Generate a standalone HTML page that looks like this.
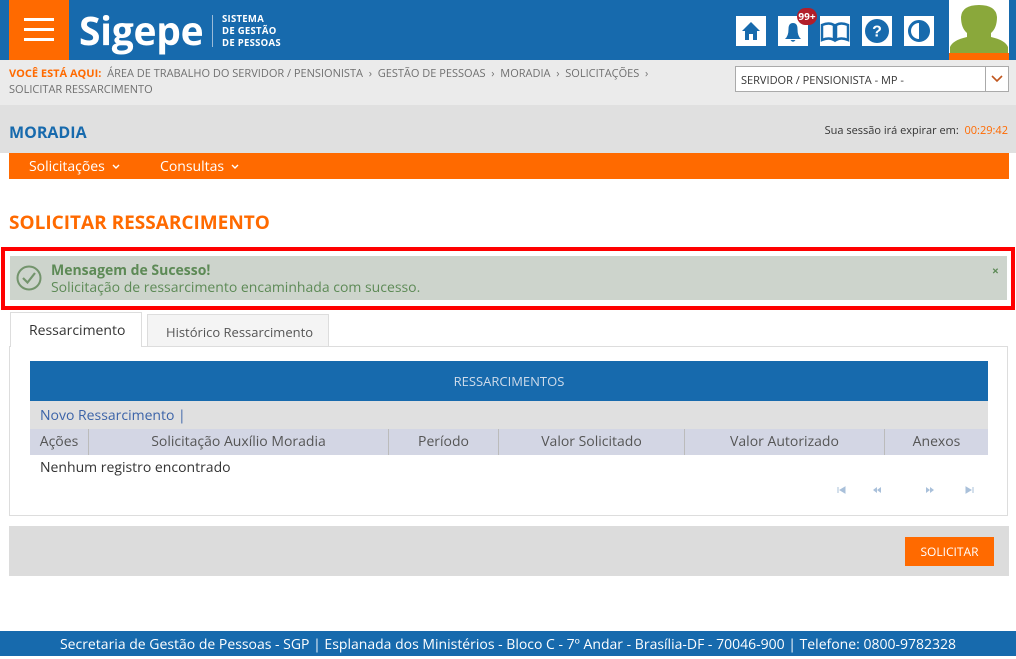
<!DOCTYPE html>
<html><head><meta charset="utf-8"><style>
*{margin:0;padding:0;box-sizing:border-box}
body{width:1016px;height:656px;position:relative;background:#fff;font-family:"Open Sans","Liberation Sans",sans-serif;overflow:hidden}
.a{position:absolute}
.ic{position:absolute;top:16px;width:30px;height:30px;background:#fff}
.pg{position:absolute;top:486px;width:10px;height:8px}
</style></head><body>
<div class="a" style="left:0;top:0;width:1016px;height:60px;background:#176aad"></div>
<div class="a" style="left:9px;top:0;width:60px;height:60px;background:#ff6a00"></div>
<div class="a" style="left:24px;top:18px;width:30px;height:3px;background:#fff"></div>
<div class="a" style="left:24px;top:28px;width:30px;height:3px;background:#fff"></div>
<div class="a" style="left:24px;top:38px;width:30px;height:3px;background:#fff"></div>
<div class="a" style="left:79px;top:4px;color:#fff;font-weight:bold;font-size:39px;letter-spacing:-0.3px">Sigepe</div>
<div class="a" style="left:212px;top:15px;width:1px;height:32px;background:#9bbbd8"></div>
<div class="a" style="left:222px;top:13px;color:#fff;font-size:9.5px;line-height:12px;font-weight:bold;letter-spacing:.3px">SISTEMA<br>DE GESTÃO<br>DE PESSOAS</div>
<div class="ic" style="left:736px"><svg width="30" height="30"><path d="M6 15 L15 6 L24 15 H21 V24 H17 V18 H13 V24 H9 V15Z" fill="#176aad"/></svg></div>
<div class="ic" style="left:778px"><svg width="30" height="30"><path d="M7 23 Q10.5 20 10.5 13 Q10.5 7 15 7 Q19.5 7 19.5 13 Q19.5 20 23 23Z M12.5 24 Q15 27.5 17.5 24Z" fill="#176aad"/></svg></div>
<div class="a" style="left:797px;top:8px;width:20px;height:17px;border-radius:9px;background:#b21e2a;color:#fff;font-size:10px;font-weight:bold;text-align:center;line-height:17px">99+</div>
<div class="ic" style="left:820px"><svg width="30" height="30"><path d="M2 9 Q9 6 14 9 V24 Q9 21 2 24Z M16 9 Q21 6 28 9 V24 Q21 21 16 24Z" fill="none" stroke="#176aad" stroke-width="2.5"/></svg></div>
<div class="ic" style="left:862px"><svg width="30" height="30"><circle cx="15" cy="15" r="12" fill="#176aad"/><text x="15" y="20.5" text-anchor="middle" fill="#fff" font-size="16" font-weight="bold" font-family="Liberation Sans">?</text></svg></div>
<div class="ic" style="left:904px"><svg width="30" height="30"><circle cx="15" cy="15" r="9.5" fill="none" stroke="#176aad" stroke-width="3"/><path d="M15 5.5 A9.5 9.5 0 0 1 15 24.5Z" fill="#176aad"/></svg></div>
<div class="a" style="left:949px;top:0;width:60px;height:60px;background:#fff"><svg width="60" height="60"><path d="M1 53 V47 Q4 40 18 37 V33 Q12 28 12 17 Q13 5 30 5 Q47 5 48 17 Q48 28 42 33 V37 Q56 40 59 47 V53Z" fill="#8aa83b"/></svg></div>
<div class="a" style="left:949px;top:53px;width:60px;height:7px;background:#ff6a00"><svg width="60" height="7"><path d="M27 2 L30 5 L33 2" fill="none" stroke="#fff" stroke-width="1"/></svg></div>
<div class="a" style="left:0;top:60px;width:1016px;height:45px;background:#ebebeb"></div>
<div class="a" style="left:9px;top:66px;font-size:11px;line-height:16px;color:#6e6e6e;width:700px"><b style="color:#ff6a00">VOCÊ ESTÁ AQUI:</b>&nbsp; ÁREA DE TRABALHO DO SERVIDOR / PENSIONISTA &nbsp;›&nbsp; GESTÃO DE PESSOAS &nbsp;›&nbsp; MORADIA &nbsp;›&nbsp; SOLICITAÇÕES &nbsp;›<br>SOLICITAR RESSARCIMENTO</div>
<div class="a" style="left:735px;top:66px;width:274px;height:26px;background:#fff;border:1px solid #aaa;font-size:11px;color:#333;padding:6px 5px">SERVIDOR / PENSIONISTA - MP -</div>
<div class="a" style="left:985px;top:67px;width:1px;height:24px;background:#aaa"></div>
<svg class="a" style="left:990px;top:74px" width="14" height="10"><path d="M2 2 L7 7 L12 2" fill="none" stroke="#c0561e" stroke-width="1.6"/></svg>
<div class="a" style="left:0;top:105px;width:1016px;height:48px;background:#e0e0e0"></div>
<div class="a" style="left:9px;top:121px;color:#176aad;font-weight:bold;font-size:16px">MORADIA</div>
<div class="a" style="right:8px;top:123px;font-size:11px;color:#333">Sua sessão irá expirar em: &nbsp;<span style="color:#ff6a00">00:29:42</span></div>
<div class="a" style="left:9px;top:153px;width:1000px;height:26px;background:#ff6a00"></div>
<div class="a" style="left:29px;top:157px;color:#fff;font-size:14px">Solicitações</div>
<div class="a" style="left:160px;top:157px;color:#fff;font-size:14px">Consultas</div>
<svg class="a" style="left:111px;top:163px" width="10" height="7"><path d="M2 2 L5 5 L8 2" fill="none" stroke="#fff" stroke-width="1.4"/></svg>
<svg class="a" style="left:230px;top:163px" width="10" height="7"><path d="M2 2 L5 5 L8 2" fill="none" stroke="#fff" stroke-width="1.4"/></svg>
<div class="a" style="left:9px;top:209px;color:#ff6a00;font-weight:bold;font-size:19px">SOLICITAR RESSARCIMENTO</div>
<div class="a" style="left:1px;top:247px;width:1014px;height:63px;border:4px solid #f00"></div>
<div class="a" style="left:10px;top:256px;width:997px;height:44px;background:#cdd4cc"></div>
<svg class="a" style="left:15px;top:264px" width="28" height="28"><circle cx="14" cy="14" r="11.5" fill="none" stroke="#73946c" stroke-width="2"/><path d="M8 14 L12.5 18.5 L20 9" fill="none" stroke="#73946c" stroke-width="2.2"/></svg>
<div class="a" style="left:51px;top:262px;color:#5d8a56;font-size:14px;line-height:17px"><b>Mensagem de Sucesso!</b><br>Solicitação de ressarcimento encaminhada com sucesso.</div>
<div class="a" style="left:992px;top:262px;color:#5d8a56;font-size:12px;font-weight:bold">×</div>
<div class="a" style="left:9px;top:346px;width:999px;height:170px;border:1px solid #ddd"></div>
<div class="a" style="left:10px;top:312px;width:132px;height:35px;background:#fff;border:1px solid #ddd;border-bottom:none;font-size:14px;color:#333;padding:8px 0 0 18px">Ressarcimento</div>
<div class="a" style="left:147px;top:314px;width:182px;height:32px;background:#f4f4f4;border:1px solid #ddd;border-bottom:none;font-size:13px;color:#555;padding:8px 0 0 18px">Histórico Ressarcimento</div>
<div class="a" style="left:30px;top:361px;width:958px;height:40px;background:#176aad;color:#cfdceb;font-size:13px;text-align:center;line-height:40px">RESSARCIMENTOS</div>
<div class="a" style="left:30px;top:401px;width:958px;height:28px;background:#e0e0e0;color:#3b63a8;font-size:14px;padding:5px 10px">Novo Ressarcimento |</div>
<div class="a" style="left:30px;top:429px;width:958px;height:26px;background:#d3d6e4;display:flex;font-size:14px;color:#555;line-height:26px;text-align:center">
<div style="width:59px;border-right:1px solid #bbb">Ações</div><div style="width:300px;border-right:1px solid #bbb">Solicitação Auxílio Moradia</div><div style="width:110px;border-right:1px solid #bbb">Período</div><div style="width:186px;border-right:1px solid #bbb">Valor Solicitado</div><div style="width:200px;border-right:1px solid #bbb">Valor Autorizado</div><div style="width:103px">Anexos</div></div>
<div class="a" style="left:40px;top:458px;font-size:14px;color:#333">Nenhum registro encontrado</div>
<svg class="pg" style="left:837px"><path d="M1 1 V7 M8 1 L3 4 L8 7Z" stroke="#a9c0da" fill="#a9c0da"/></svg>
<svg class="pg" style="left:872px"><path d="M5 1 L1 4 L5 7Z M9 1 L5 4 L9 7Z" fill="#a9c0da"/></svg>
<svg class="pg" style="left:925px"><path d="M1 1 L5 4 L1 7Z M5 1 L9 4 L5 7Z" fill="#a9c0da"/></svg>
<svg class="pg" style="left:964px"><path d="M9 1 V7 M2 1 L7 4 L2 7Z" stroke="#a9c0da" fill="#a9c0da"/></svg>
<div class="a" style="left:9px;top:526px;width:1000px;height:50px;background:#dcdcdc"></div>
<div class="a" style="left:905px;top:537px;width:89px;height:29px;background:#ff6a00;color:#fff;font-size:12px;text-align:center;line-height:29px">SOLICITAR</div>
<div class="a" style="left:0;top:631px;width:1016px;height:25px;background:#176aad;color:#fff;font-size:14px;text-align:center;line-height:28px">Secretaria de Gestão de Pessoas - SGP | Esplanada dos Ministérios - Bloco C - 7º Andar - Brasília-DF - 70046-900 | Telefone: 0800-9782328</div>
</body></html>
